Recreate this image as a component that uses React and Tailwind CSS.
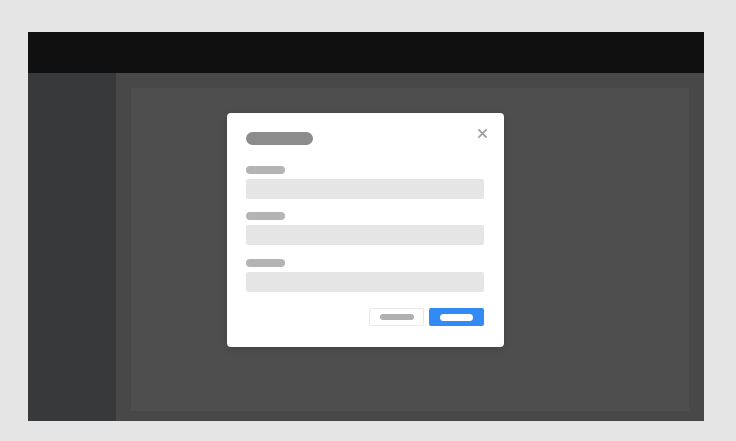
export default function App() {
  const fields = [
    { mt: 'mt-[21px]' },
    { mt: 'mt-[13px]' },
    { mt: 'mt-[14px]' },
  ];

  return (
    <div className="h-[441px] w-full bg-[#e5e5e5] pt-[32px] pl-[28px]" style={{ fontFamily: 'Inter, sans-serif' }}>
      {/* Window */}
      <div className="relative flex h-[389px] w-[676px] flex-col">
        <div className="h-[41px] bg-[#101010]" />
        <div className="flex flex-1">
          <div className="w-[88px] bg-[#38393b]" />
          <div className="flex-1 bg-[#484848] px-[15px] pt-[15px] pb-[10px]">
            <div className="h-full bg-[#4e4e4e]" />
          </div>
        </div>

        {/* Dialog */}
        <div className="absolute left-[199px] top-[81px] h-[234px] w-[277px] rounded-[4px] bg-white px-[19px] pt-[19px] shadow-[0_2px_8px_rgba(0,0,0,0.15)]">
          <button className="absolute right-[16px] top-[15px] flex h-[11px] w-[11px] items-center justify-center text-[#9a9a9a]">
            <svg width="9" height="9" viewBox="0 0 10 10" fill="none" stroke="currentColor" strokeWidth="1.7" strokeLinecap="round">
              <path d="M1 1l8 8M9 1L1 9" />
            </svg>
          </button>
          <div className="h-[13px] w-[67px] rounded-full bg-[#8c8c8c]" />

          {fields.map((f, i) => (
            <div key={i} className={f.mt}>
              <div className="h-[8px] w-[39px] rounded-full bg-[#b4b4b4]" />
              <div className="mt-[5px] h-[20px] w-[238px] rounded-[2px] bg-[#e5e5e5]" />
            </div>
          ))}

          <div className="mt-[16px] flex w-[238px] justify-end gap-[5px]">
            <div className="flex h-[18px] w-[55px] items-center justify-center rounded-[2px] border border-[#e8e8e8] bg-white">
              <div className="h-[6px] w-[34px] rounded-full bg-[#b0b0b0]" />
            </div>
            <div className="flex h-[18px] w-[55px] items-center justify-center rounded-[2px] bg-[#348af5]">
              <div className="h-[7px] w-[33px] rounded-full bg-white" />
            </div>
          </div>
        </div>
      </div>
    </div>
  );
}
